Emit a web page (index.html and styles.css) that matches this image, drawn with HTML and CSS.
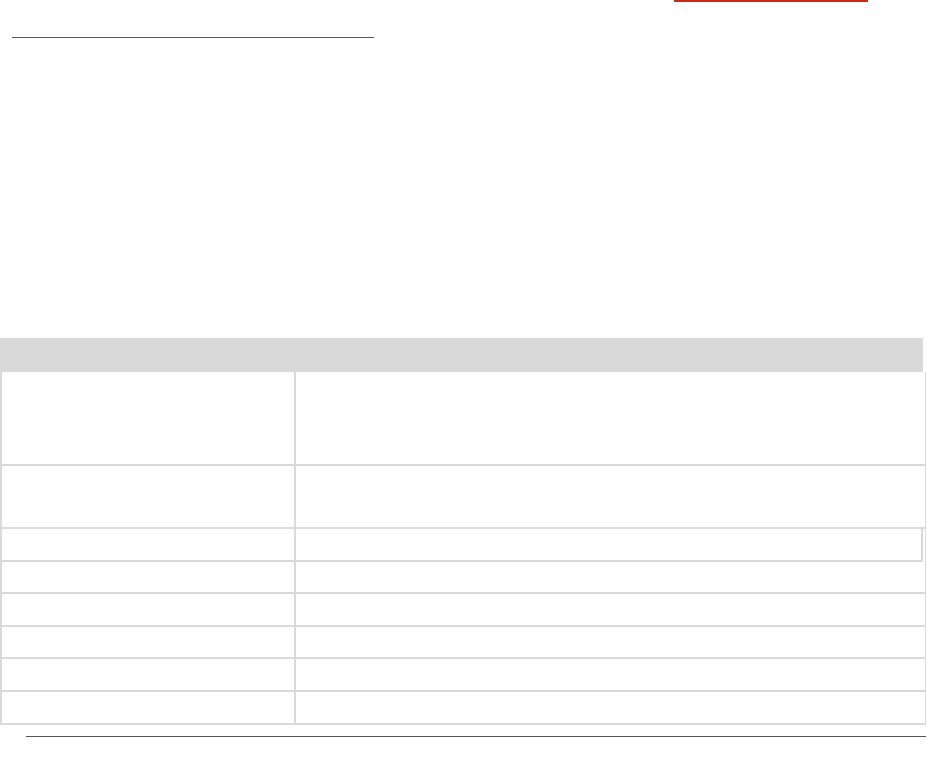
FILE: index.html
```html
<!DOCTYPE html>
<html>
<head>
<meta charset="utf-8">
<link rel="stylesheet" href="styles.css">
</head>
<body>
<div class="page">
  <div class="top-accent"></div>
  <div class="title-rule"></div>
  <div class="table-head"></div>
  <div class="table-body">
    <div class="row r1"><div class="cell key"></div><div class="cell val"></div></div>
    <div class="row r2"><div class="cell key"></div><div class="cell val"></div></div>
    <div class="row r3 narrow"><div class="cell key"></div><div class="cell val"></div></div>
    <div class="row r4"><div class="cell key"></div><div class="cell val"></div></div>
    <div class="row r5"><div class="cell key"></div><div class="cell val"></div></div>
    <div class="row r6"><div class="cell key"></div><div class="cell val"></div></div>
    <div class="row r7"><div class="cell key"></div><div class="cell val"></div></div>
    <div class="row r8"><div class="cell key"></div><div class="cell val"></div></div>
  </div>
  <div class="foot-rule"></div>
</div>
</body>
</html>
```

FILE: styles.css
```css
html, body {
  margin: 0;
  padding: 0;
  background: #ffffff;
  font-family: "Liberation Sans", Arial, sans-serif;
}

.page {
  width: 930px;
  display: flex;
  flex-direction: column;
}

.top-accent {
  margin-left: 674px;
  width: 194px;
  height: 2px;
  background: #cc2a18;
}

.title-rule {
  margin-top: 35px;
  margin-left: 12px;
  width: 362px;
  height: 1px;
  background: #b3331d;
}

.table-head {
  margin-top: 300px;
  width: 923px;
  height: 34px;
  background: #d9d9d9;
}

.table-body {
  width: 925px;
  border-right: 1px solid #d9d9d9;
  display: flex;
  flex-direction: column;
}

.row {
  display: grid;
  grid-template-columns: 294px 1fr;
  border-left: 2px solid #d9d9d9;
  border-bottom: 2px solid #d9d9d9;
}

.row.narrow {
  margin-right: 2px;
  border-right: 2px solid #d9d9d9;
}

.cell.key {
  border-right: 2px solid #d9d9d9;
}

.r1 { height: 92px; }
.r2 { height: 61px; }
.r3 { height: 31px; }
.r4 { height: 30px; }
.r5 { height: 31px; }
.r6 { height: 30px; }
.r7 { height: 31px; }
.r8 { height: 31px; }

.foot-rule {
  margin-top: 11px;
  margin-left: 26px;
  width: 900px;
  height: 1px;
  background: #555555;
}
```
